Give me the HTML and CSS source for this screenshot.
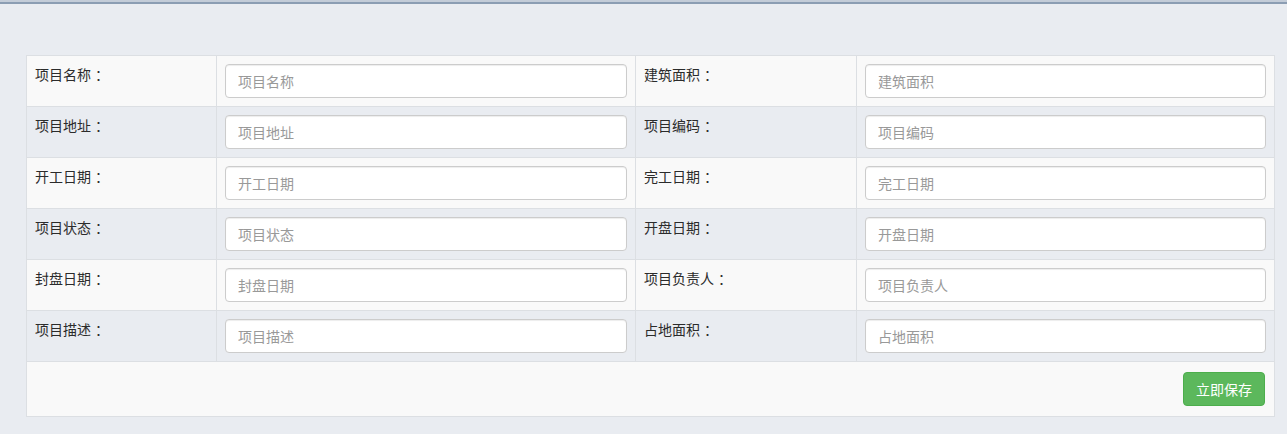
FILE: index.html
```html
<!DOCTYPE html>
<html lang="zh-CN">
<head>
<meta charset="utf-8">
<title>项目信息</title>
<link rel="stylesheet" href="styles.css">
</head>
<body>
<div class="topbar"></div>
<div class="page">
  <form class="form-table">
    <div class="row">
      <div class="cell label">项目名称<span class="colon">：</span></div>
      <div class="cell field"><input class="input" placeholder="项目名称"></div>
      <div class="cell label">建筑面积<span class="colon">：</span></div>
      <div class="cell field last"><input class="input" placeholder="建筑面积"></div>
    </div>
    <div class="row alt">
      <div class="cell label">项目地址<span class="colon">：</span></div>
      <div class="cell field"><input class="input" placeholder="项目地址"></div>
      <div class="cell label">项目编码<span class="colon">：</span></div>
      <div class="cell field last"><input class="input" placeholder="项目编码"></div>
    </div>
    <div class="row">
      <div class="cell label">开工日期<span class="colon">：</span></div>
      <div class="cell field"><input class="input" placeholder="开工日期"></div>
      <div class="cell label">完工日期<span class="colon">：</span></div>
      <div class="cell field last"><input class="input" placeholder="完工日期"></div>
    </div>
    <div class="row alt">
      <div class="cell label">项目状态<span class="colon">：</span></div>
      <div class="cell field"><input class="input" placeholder="项目状态"></div>
      <div class="cell label">开盘日期<span class="colon">：</span></div>
      <div class="cell field last"><input class="input" placeholder="开盘日期"></div>
    </div>
    <div class="row">
      <div class="cell label">封盘日期<span class="colon">：</span></div>
      <div class="cell field"><input class="input" placeholder="封盘日期"></div>
      <div class="cell label">项目负责人<span class="colon">：</span></div>
      <div class="cell field last"><input class="input" placeholder="项目负责人"></div>
    </div>
    <div class="row alt">
      <div class="cell label">项目描述<span class="colon">：</span></div>
      <div class="cell field"><input class="input" placeholder="项目描述"></div>
      <div class="cell label">占地面积<span class="colon">：</span></div>
      <div class="cell field last"><input class="input" placeholder="占地面积"></div>
    </div>
    <div class="footer">
      <button type="button" class="btn-save">立即保存</button>
    </div>
  </form>
</div>
</body>
</html>
```
FILE: styles.css
```css
* { box-sizing: border-box; }
html, body {
  margin: 0;
  padding: 0;
  background: #e9ecf1;
  font-family: "Noto Sans CJK SC", "Noto Sans", "Liberation Sans", sans-serif;
  color: #333;
}
.topbar {
  height: 4px;
  background: linear-gradient(to bottom, #c3ccd8 0, #c3ccd8 2px, #8b9db3 2px, #8b9db3 4px);
}
.page {
  padding: 51px 12px 0 26px;
}
.form-table {
  width: 1249px;
  border: 1px solid #dcdfe3;
  background: #f9f9f9;
}
.row {
  display: grid;
  grid-template-columns: 190px 419px 221px 417px;
  height: 51px;
  border-bottom: 1px solid #dcdfe3;
  background: #f9f9f9;
}
.row.alt {
  background: #e9ecf1;
}
.cell {
  padding: 8px;
  border-right: 1px solid #dcdfe3;
}
.cell.last {
  border-right: none;
}
.label {
  font-size: 14px;
  line-height: 20px;
  color: #2b2b2b;
}
.colon {
  padding-left: 4px;
}
.input {
  display: block;
  width: 100%;
  height: 34px;
  padding: 6px 12px;
  font-family: inherit;
  font-size: 14px;
  line-height: 20px;
  color: #555;
  background: #fff;
  border: 1px solid #ccc;
  border-radius: 4px;
  box-shadow: inset 0 1px 1px rgba(0,0,0,.075);
  outline: none;
}
.input::placeholder {
  color: #999;
}
.footer {
  height: 54px;
  padding: 10px 9px 10px 10px;
  display: flex;
  justify-content: flex-end;
  align-items: flex-start;
  background: #f9f9f9;
}
.btn-save {
  height: 34px;
  padding: 6px 12px;
  font-family: inherit;
  font-size: 14px;
  line-height: 20px;
  color: #fff;
  background: #5cb85c;
  border: 1px solid #4cae4c;
  border-radius: 4px;
  cursor: pointer;
}
```
